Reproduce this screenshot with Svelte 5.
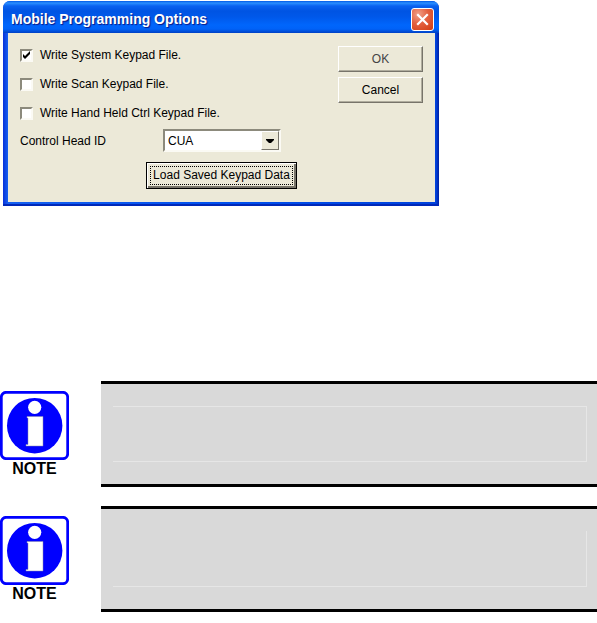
<script>
	let options = $state([
		{ id: 'system', label: 'Write System Keypad File.', checked: true },
		{ id: 'scan', label: 'Write Scan Keypad File.', checked: false },
		{ id: 'handheld', label: 'Write Hand Held Ctrl Keypad File.', checked: false },
	]);

	let controlHead = $state('CUA');

	const notes = [
		{ id: 1, topRule: true },
		{ id: 2, topRule: false },
	];
</script>

<main>
	<section class="dialog" role="dialog" aria-labelledby="dialog-title">
		<header class="titlebar">
			<h1 id="dialog-title">Mobile Programming Options</h1>
			<button class="close" aria-label="Close">
				<svg viewBox="0 0 21 21" width="21" height="21">
					<path d="M6 6L15 15M15 6L6 15" stroke="#fff" stroke-width="2.2" stroke-linecap="square" />
				</svg>
			</button>
		</header>

		<div class="body">
			<form class="fields">
				{#each options as option (option.id)}
					<label class="check">
						<input type="checkbox" bind:checked={option.checked} />
						<span>{option.label}</span>
					</label>
				{/each}

				<div class="head-row">
					<label for="control-head">Control Head ID</label>
					<div class="combo">
						<select id="control-head" bind:value={controlHead}>
							<option>CUA</option>
						</select>
						<span class="arrow">
							<svg viewBox="0 0 8 4" width="8" height="4">
								<path d="M0 0H8V1L5 4H3L0 1Z" fill="#000" />
							</svg>
						</span>
					</div>
				</div>

				<button type="button" class="btn load"><span>Load Saved Keypad Data</span></button>
			</form>

			<div class="actions">
				<button class="btn ok">OK</button>
				<button class="btn">Cancel</button>
			</div>
		</div>
	</section>

	<div class="notes">
		{#each notes as note (note.id)}
			<aside class="note">
				<div class="badge">
					<svg viewBox="0 0 69 69" width="69" height="69" aria-hidden="true">
						<rect x="1.3" y="1.3" width="66.4" height="66.4" rx="5" fill="#fff" stroke="#00f" stroke-width="2.8" />
						<circle cx="34.7" cy="34.7" r="27.7" fill="#00f" />
						<circle cx="34.7" cy="16.3" r="6.6" fill="#fff" />
						<path d="M27 25.5H43V55H26V53.5H28V27H27Z" fill="#fff" stroke="#88a" stroke-width="0.5" />
					</svg>
					<strong>NOTE</strong>
				</div>
				<div class="panel">
					<div class="frame" class:top={note.topRule}></div>
				</div>
			</aside>
		{/each}
	</div>
</main>

<style>
	:global(body) {
		margin: 0;
		background: #fff;
	}

	main {
		padding-top: 1px;
		font-family: "Liberation Sans", Arial, sans-serif;
		font-size: 12px;
		color: #000;
	}

	.dialog {
		box-sizing: border-box;
		max-width: 436px;
		margin-left: 3px;
		padding: 0 4px 4px 5px;
		border-radius: 7px 7px 0 0;
		background: linear-gradient(to right, #0831d9 0, #1660f0 5px, #0050ee 50%, #0042dc calc(100% - 3px), #001ea0 100%);
		box-shadow: inset 0 -2px 0 #0028b8;
	}

	.titlebar {
		display: flex;
		align-items: center;
		justify-content: space-between;
		height: 32px;
		margin: 0 -4px 0 -5px;
		padding: 0 5px 0 8px;
		border-radius: 7px 7px 0 0;
		background: linear-gradient(#0058e6 0, #2b90ff 2px, #0a62f0 5px, #0054e3 10px, #0058ea 16px, #0066fc 24px, #0062f8 28px, #0040c4 32px);
	}

	h1 {
		margin: 0;
		padding-top: 4px;
		font-family: "Liberation Sans", Arial, sans-serif;
		font-size: 14px;
		line-height: 16px;
		font-weight: 700;
		color: #fff;
		text-shadow: 1px 1px 1px #0a1883;
	}

	.close {
		display: block;
		width: 23px;
		height: 23px;
		margin-top: 4px;
		padding: 0;
		border: 1px solid #fff;
		border-radius: 3px;
		background: radial-gradient(circle at 30% 25%, #f0a088 0, #e3603f 45%, #d23c10 100%);
	}

	.close svg {
		display: block;
	}

	.body {
		display: flex;
		justify-content: space-between;
		padding: 13px 12px 13px;
		background: #ece9d8;
	}

	.fields {
		display: flex;
		flex-direction: column;
		flex: 1;
	}

	.check {
		display: flex;
		align-items: center;
		gap: 7px;
		height: 18px;
		margin-bottom: 11px;
	}

	.check input {
		appearance: none;
		width: 13px;
		height: 13px;
		margin: 0;
		border: 2px solid;
		border-color: #8c8a7c #fbfaf4 #fbfaf4 #8c8a7c;
		background: #fff;
	}

	.check input:checked {
		background: #fff url("data:image/svg+xml,%3Csvg xmlns='http://www.w3.org/2000/svg' viewBox='0 0 9 9'%3E%3Cpath d='M1 3v3l2 2 5-5V0L3 5z'/%3E%3C/svg%3E") center / 9px 9px no-repeat;
	}

	.head-row {
		display: flex;
		align-items: center;
		height: 23px;
		margin-top: -4px;
	}

	.head-row label {
		width: 143px;
	}

	.combo {
		position: relative;
		width: 118px;
		height: 23px;
	}

	select {
		appearance: none;
		box-sizing: border-box;
		width: 100%;
		height: 100%;
		padding: 0 22px 0 3px;
		border: 2px solid;
		border-color: #8c8a7c #fbfaf4 #fbfaf4 #8c8a7c;
		border-radius: 0;
		background: #fff;
		font: inherit;
		color: #000;
	}

	.arrow {
		position: absolute;
		top: 2px;
		right: 2px;
		bottom: 2px;
		display: flex;
		align-items: center;
		justify-content: center;
		box-sizing: border-box;
		width: 18px;
		border: 1px solid;
		border-color: #fff #77746a #77746a #fff;
		background: #ece9d8;
		pointer-events: none;
	}

	.actions {
		display: flex;
		flex-direction: column;
		gap: 5px;
		width: 85px;
	}

	.btn {
		height: 26px;
		padding: 0;
		border: 1px solid;
		border-color: #fff #77746a #77746a #fff;
		border-radius: 0;
		background: #ece9d8;
		box-shadow: inset -1px -1px 0 #b0ad9e;
		font: inherit;
		color: #000;
	}

	.ok {
		color: #444;
	}

	.load {
		width: 151px;
		height: 27px;
		margin: 10px 0 0 126px;
		padding: 3px;
		border-color: #000;
		box-shadow: inset 1px 1px 0 #fff, inset -2px -2px 0 #77746a;
	}

	.load span {
		display: block;
		border: 1px dotted #000;
		line-height: 17px;
		white-space: nowrap;
	}

	.notes {
		display: flex;
		flex-direction: column;
		gap: 19px;
		margin-top: 175px;
	}

	.note {
		display: flex;
		gap: 32px;
	}

	.badge {
		display: flex;
		flex-direction: column;
		align-items: center;
		width: 69px;
		padding-top: 10px;
	}

	.badge strong {
		font-size: 16px;
		line-height: 17px;
	}

	.panel {
		box-sizing: border-box;
		flex: 1;
		height: 106px;
		padding: 22px 10px 22px 12px;
		border: solid #000;
		border-width: 3px 0;
		background: #d9d9d9;
	}

	.frame {
		box-sizing: border-box;
		height: 56px;
		border: solid #e6e6e6;
		border-width: 0 1px 1px 0;
	}

	.frame.top {
		border-top-width: 1px;
	}
</style>
